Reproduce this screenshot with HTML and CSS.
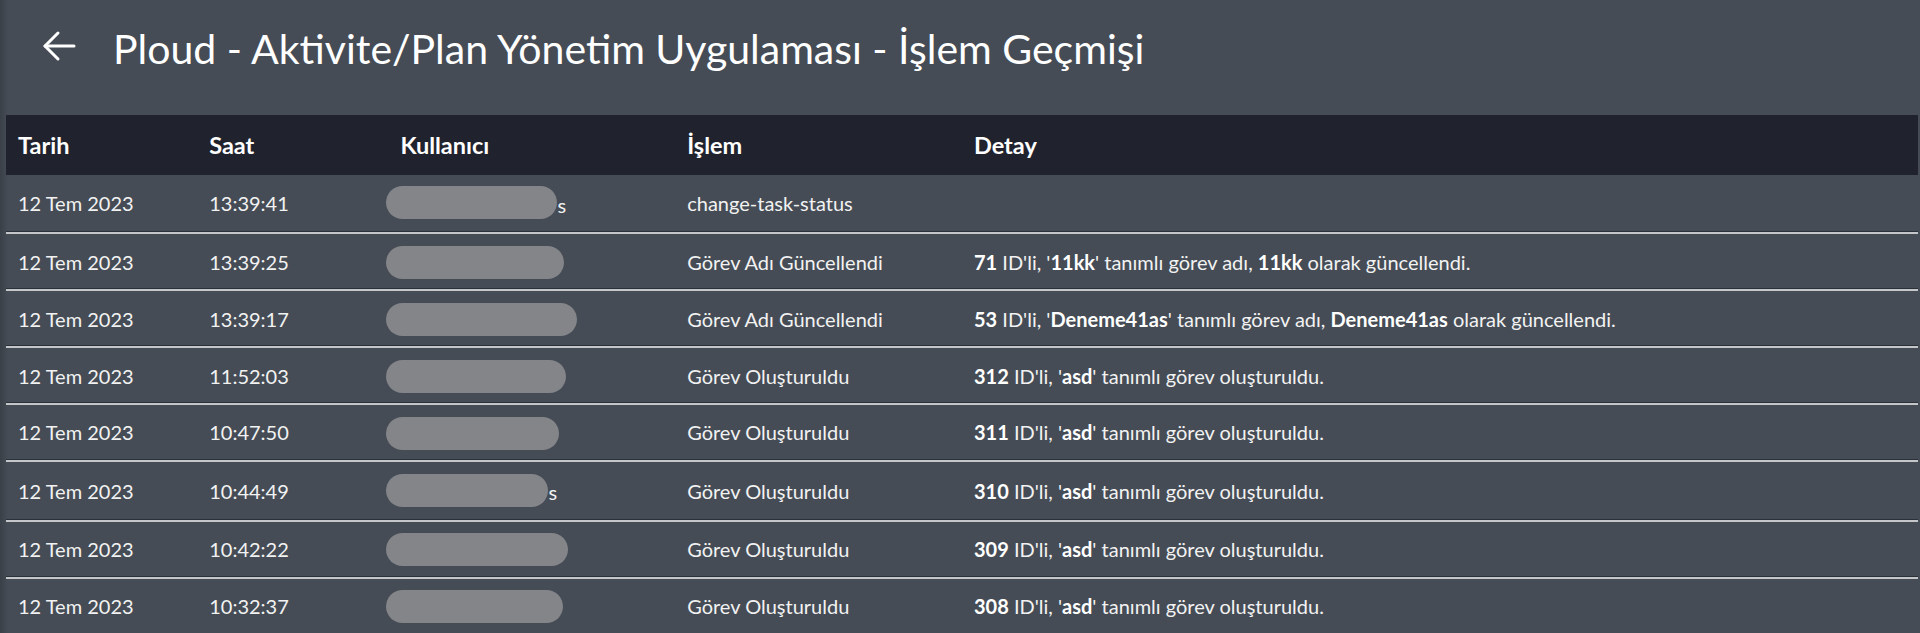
FILE: index.html
```html
<!DOCTYPE html>
<html lang="tr">
<head>
  <meta charset="UTF-8" />
  <meta name="viewport" content="width=device-width, initial-scale=1" />
  <title>Ploud - İşlem Geçmişi</title>
  <link rel="stylesheet" href="styles.css">
</head>
<body>
  <header class="topbar">
    <a class="back" href="#">
      <svg width="34" height="32" viewBox="0 0 34 32" fill="none" stroke="#fff" stroke-width="3" stroke-linecap="round" stroke-linejoin="round">
        <path d="M32 16H3" />
        <path d="M16 3L3 16l13 13" />
      </svg>
    </a>
    <h1>Ploud - Aktivite/Plan Yönetim Uygulaması - İşlem Geçmişi</h1>
  </header>

  <main class="content">
    <table class="log">
      <thead>
        <tr>
          <th class="c-date">Tarih</th>
          <th class="c-time">Saat</th>
          <th class="c-user">Kullanıcı</th>
          <th class="c-action">İşlem</th>
          <th>Detay</th>
        </tr>
      </thead>
      <tbody>
        <tr>
          <td>12 Tem 2023</td>
          <td>13:39:41</td>
          <td><span class="redact" style="width: 171px"></span><span class="tail">s</span></td>
          <td>change-task-status</td>
          <td></td>
        </tr>
        <tr>
          <td>12 Tem 2023</td>
          <td>13:39:25</td>
          <td><span class="redact" style="width: 178px"></span></td>
          <td>Görev Adı Güncellendi</td>
          <td><b>71</b> ID'li, '<b>11kk</b>' tanımlı görev adı, <b>11kk</b> olarak güncellendi.</td>
        </tr>
        <tr>
          <td>12 Tem 2023</td>
          <td>13:39:17</td>
          <td><span class="redact" style="width: 191px"></span></td>
          <td>Görev Adı Güncellendi</td>
          <td><b>53</b> ID'li, '<b>Deneme41as</b>' tanımlı görev adı, <b>Deneme41as</b> olarak güncellendi.</td>
        </tr>
        <tr>
          <td>12 Tem 2023</td>
          <td>11:52:03</td>
          <td><span class="redact" style="width: 180px"></span></td>
          <td>Görev Oluşturuldu</td>
          <td><b>312</b> ID'li, '<b>asd</b>' tanımlı görev oluşturuldu.</td>
        </tr>
        <tr>
          <td>12 Tem 2023</td>
          <td>10:47:50</td>
          <td><span class="redact" style="width: 173px"></span></td>
          <td>Görev Oluşturuldu</td>
          <td><b>311</b> ID'li, '<b>asd</b>' tanımlı görev oluşturuldu.</td>
        </tr>
        <tr>
          <td>12 Tem 2023</td>
          <td>10:44:49</td>
          <td><span class="redact" style="width: 162px"></span><span class="tail">s</span></td>
          <td>Görev Oluşturuldu</td>
          <td><b>310</b> ID'li, '<b>asd</b>' tanımlı görev oluşturuldu.</td>
        </tr>
        <tr>
          <td>12 Tem 2023</td>
          <td>10:42:22</td>
          <td><span class="redact" style="width: 182px"></span></td>
          <td>Görev Oluşturuldu</td>
          <td><b>309</b> ID'li, '<b>asd</b>' tanımlı görev oluşturuldu.</td>
        </tr>
        <tr>
          <td>12 Tem 2023</td>
          <td>10:32:37</td>
          <td><span class="redact" style="width: 177px"></span></td>
          <td>Görev Oluşturuldu</td>
          <td><b>308</b> ID'li, '<b>asd</b>' tanımlı görev oluşturuldu.</td>
        </tr>
      </tbody>
    </table>
  </main>
</body>
</html>
```

FILE: styles.css
```css
body {
  margin: 0;
  font-family: Lato, "Noto Sans", sans-serif;
  background: linear-gradient(to right, #3a4048 0, #454c55 8px) #454c55;
  color: #f2f2f2;
  overflow: hidden;
}

.topbar {
  height: 115px;
  display: flex;
  align-items: center;
  padding-left: 42px;
  box-sizing: border-box;
}

.back {
  display: flex;
  width: 34px;
  height: 32px;
  margin-right: 37px;
  margin-top: -24px;
}

.topbar h1 {
  margin: -18px 0 0;
  font-size: 41px;
  font-weight: 400;
  color: #fff;
  white-space: nowrap;
}

.content {
  padding: 0 2px 0 6px;
}

.log {
  width: 100%;
  border-collapse: collapse;
  table-layout: fixed;
  font-size: 20px;
  line-height: 30px;
}

.log th {
  box-sizing: border-box;
  background-color: #20232d;
  color: #fff;
  text-align: left;
  font-size: 23.5px;
  font-weight: 700;
  padding: 15px 12px;
}

.c-date, .c-time {
  width: 10%;
}

.c-user, .c-action {
  width: 15%;
}

.log td {
  padding: 12px 12px 12.5px;
  border-bottom: 2px solid #c4c6c9;
  box-shadow: inset 0 -1px 0 #2b3139;
  white-space: nowrap;
}

.log td b {
  color: #fff;
}

.redact {
  display: inline-block;
  vertical-align: middle;
  height: 33px;
  margin: -6px 0 -2px -14px;
  border-radius: 17px;
  background-color: #838589;
}

.tail {
  vertical-align: middle;
}
```
